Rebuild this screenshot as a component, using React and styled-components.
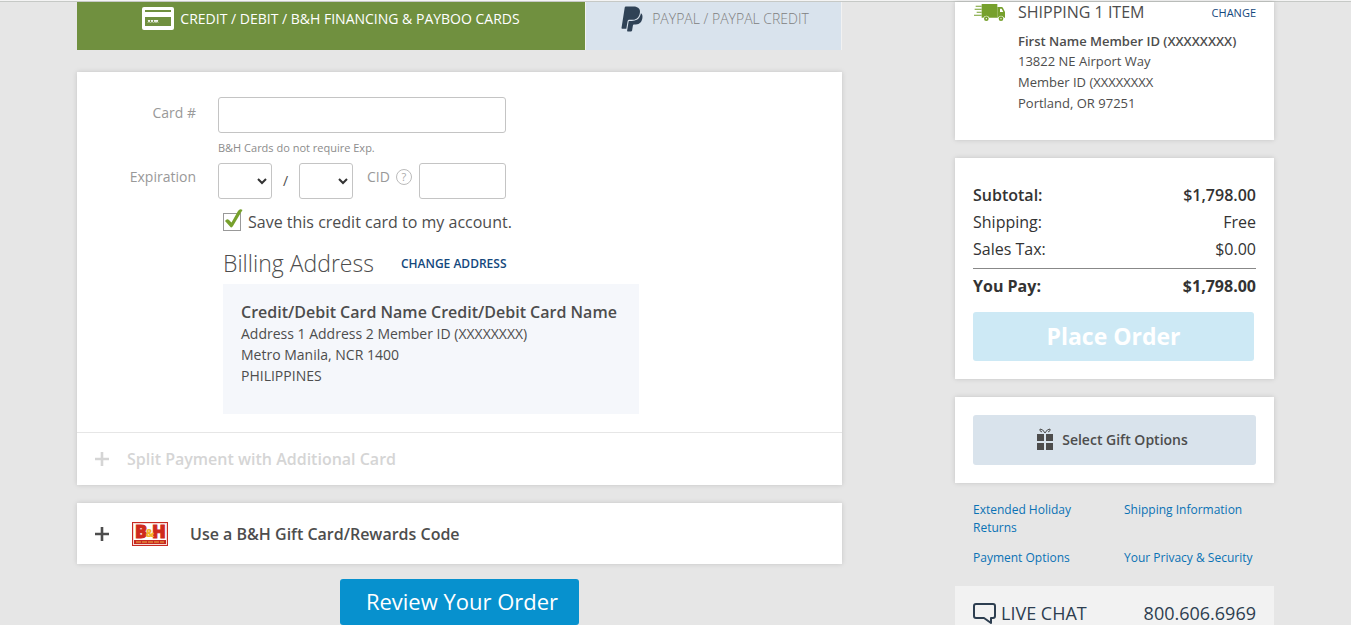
import React, { useState } from 'react';
import styled, { createGlobalStyle } from 'styled-components';
import { FaPaypal } from 'react-icons/fa';

const GlobalStyle = createGlobalStyle`
  * {
    box-sizing: border-box;
  }
  body {
    margin: 0;
    background: #e6e6e6;
    color: #4d4d4d;
    font-family: "Open Sans", "Noto Sans", sans-serif;
    font-size: 14px;
  }
  button, input, select {
    font-family: inherit;
    margin: 0;
  }
  a {
    text-decoration: none;
  }
`;

const TopLine = styled.div`
  height: 2px;
  background: #f4f4f4;
  border-bottom: 1px solid #c6c9c6;
`;
const Page = styled.div`
  display: grid;
  grid-template-columns: 765fr 319fr;
  column-gap: 113px;
  padding: 0 77px;
  align-items: start;
`;
const Column = styled.div`
  display: flex;
  flex-direction: column;
`;
const Card = styled.section`
  background: white;
  box-shadow: 0 0 5px rgba(0, 0, 0, 0.15);
  margin-bottom: 18px;
`;

/* payment tabs */
const Tabs = styled.div`
  display: grid;
  grid-template-columns: 508fr 255fr;
  gap: 1px;
  padding-right: 1px;
  margin-bottom: 22px;
  background: #f2f2f2;
`;
const Tab = styled.button`
  display: flex;
  align-items: center;
  justify-content: center;
  gap: 6px;
  height: 48px;
  padding: 0 0 15px;
  border: none;
  background: ${(props) => (props.$active ? '#70903f' : '#d9e3ed')};
  color: ${(props) => (props.$active ? 'white' : '#808080')};
  font-size: 14px;
  font-weight: ${(props) => (props.$active ? 400 : 300)};
  white-space: nowrap;
`;

/* card form */
const Form = styled.div`
  padding: 25px 0 18px;
`;
const FormRow = styled.div`
  display: grid;
  grid-template-columns: 119px 288px;
  column-gap: 22px;
`;
const Label = styled.label`
  color: #999;
  font-size: 14px;
  line-height: ${(props) => (props.$first ? 32 : 28)}px;
  text-align: right;
`;
const Hint = styled.div`
  grid-column: 2;
  color: #8c8c8c;
  font-size: 11px;
  line-height: 30px;
`;
const Input = styled.input`
  width: 100%;
  height: 36px;
  padding: 0 10px;
  border: 1px solid #c4c4c4;
  border-radius: 3px;
  background: white;
  font-size: 14px;
`;
const ExpirationFields = styled.div`
  display: grid;
  grid-template-columns: 54px 27px 54px 66px 87px;
`;
const SelectBox = styled.div`
  display: grid;
  align-items: center;
  > * {
    grid-area: 1 / 1;
  }
  > svg {
    justify-self: end;
    margin-right: 5px;
    pointer-events: none;
  }
`;
const Select = styled.select`
  appearance: none;
  width: 100%;
  height: 36px;
  padding: 0 8px;
  border: 1px solid #c4c4c4;
  border-radius: 3px;
  background: white;
  color: #4d4d4d;
  font-size: 14px;
`;
const Slash = styled.span`
  line-height: 36px;
  text-align: center;
`;
const CidLabel = styled.div`
  display: flex;
  align-items: center;
  gap: 6px;
  height: 28px;
  padding-left: 14px;
`;
const HelpButton = styled.button`
  width: 16px;
  height: 16px;
  padding: 0;
  border: 1px solid #bbb;
  border-radius: 50%;
  background: none;
  color: #aaa;
  font-size: 11px;
  line-height: 14px;
`;
const Indented = styled.div`
  margin-left: 146px;
`;
const SaveLabel = styled.label`
  display: flex;
  align-items: center;
  gap: 7px;
  margin-top: 10px;
  font-size: 16px;
  line-height: 26px;
`;
const CheckBox = styled.span`
  display: grid;
  width: 18px;
  > * {
    grid-area: 1 / 1;
  }
  > svg {
    overflow: visible;
    pointer-events: none;
  }
`;
const CheckInput = styled.input`
  appearance: none;
  width: 18px;
  height: 18px;
  border: 1px solid #999;
  background: white;
`;
const BillingHead = styled.div`
  display: flex;
  align-items: center;
  gap: 27px;
  margin-top: 12px;
`;
const BillingTitle = styled.h2`
  margin: 0;
  font-size: 23px;
  font-weight: 300;
  line-height: 32px;
`;
const TextLink = styled.a`
  color: #14487d;
  font-size: ${(props) => props.$size || 12}px;
  font-weight: ${(props) => props.$weight || 400};
`;
const AddressBox = styled.address`
  width: 416px;
  margin-top: 5px;
  padding: 17px 0 28px 18px;
  background: #f5f7fb;
  font-style: normal;
  font-size: 14px;
  line-height: 21px;
  white-space: nowrap;
  > strong {
    display: block;
    font-size: 16px;
    font-weight: 600;
    line-height: 22px;
  }
`;
const ExpandRow = styled.button`
  display: flex;
  align-items: center;
  width: 100%;
  height: ${(props) => (props.disabled ? 53 : 61)}px;
  padding: ${(props) => (props.disabled ? 0 : 1)}px 18px 0;
  border: none;
  border-top: ${(props) => (props.disabled ? '1px solid #e6e6e6' : 'none')};
  background: none;
  color: ${(props) => (props.disabled ? '#d5d5d5' : '#4d4d4d')};
  font-size: 16px;
  font-weight: 600;
  text-align: left;
  > span {
    margin-left: ${(props) => (props.disabled ? 18 : 22)}px;
  }
  > svg + svg {
    margin-left: 23px;
  }
`;
const ReviewButton = styled.button`
  align-self: center;
  height: 46px;
  margin-top: -3px;
  padding: 0 21px 2px 26px;
  border: none;
  border-radius: 3px;
  background: #0791ce;
  color: white;
  font-size: 22px;
`;

/* right column */
const ShippingCard = styled(Card)`
  display: grid;
  grid-template-columns: 31px 1fr;
  column-gap: 13px;
  height: 138px;
  padding: 0 18px 0 19px;
  > svg {
    margin-top: 2px;
  }
`;
const ShippingHead = styled.div`
  display: flex;
  align-items: center;
  justify-content: space-between;
  margin-bottom: 8px;
`;
const ShippingTitle = styled.h2`
  margin: 0;
  font-size: 16px;
  font-weight: 400;
  line-height: 21px;
`;
const ShippingAddress = styled.address`
  font-style: normal;
  font-size: 13px;
  line-height: 21px;
  > strong {
    display: block;
    font-weight: 600;
    line-height: 20px;
  }
`;
const SummaryCard = styled(Card)`
  padding: 23px 18px 18px;
`;
const Totals = styled.table`
  width: 100%;
  border-collapse: collapse;
  color: #333;
  font-size: 16px;
`;
const TotalRow = styled.tr`
  height: 27px;
  font-weight: ${(props) => props.$weight};
  > th {
    padding: 0;
    font-weight: inherit;
    text-align: left;
  }
  > td {
    padding: 0;
    text-align: right;
  }
  &:nth-last-child(2) {
    height: 33px;
    > * {
      padding-bottom: 5px;
    }
  }
  &:last-child {
    height: 36px;
    border-top: 1px solid #888;
  }
`;
const PlaceOrder = styled.button`
  display: block;
  width: calc(100% - 2px);
  height: 49px;
  margin-top: 8px;
  padding: 0 0 2px;
  border: none;
  border-radius: 3px;
  background: #cde9f5;
  color: white;
  font-size: 23px;
  font-weight: 700;
`;
const GiftCard = styled(Card)`
  padding: 18px;
`;
const GiftButton = styled.button`
  display: flex;
  align-items: center;
  justify-content: center;
  gap: 9px;
  width: 100%;
  height: 50px;
  padding: 0 4px 2px 0;
  border: none;
  border-radius: 3px;
  background: #d9e3ec;
  color: #4d4d4d;
  font-size: 14px;
  font-weight: 600;
`;
const Links = styled.nav`
  display: grid;
  grid-template-columns: 1fr 132px;
  column-gap: 19px;
  row-gap: 12px;
  padding: 0 18px;
  margin-bottom: 19px;
`;
const InfoLink = styled.a`
  max-width: 132px;
  padding-right: ${(props) => (props.$narrow ? 30 : 0)}px;
  color: #0a72b5;
  font-size: 12px;
  line-height: 18px;
`;
const ContactBar = styled.div`
  display: flex;
  align-items: center;
  justify-content: space-between;
  padding: 15px 18px 0;
  background: #f2f2f2;
  font-size: 18px;
  line-height: 24px;
`;
const ContactLink = styled.a`
  display: flex;
  align-items: center;
  gap: 5px;
  color: #2d3e50;
`;

const CardIcon = () => (
  <svg width="32" height="23" viewBox="0 0 32 23">
    <rect width="32" height="23" rx="2" fill="white" />
    <path d="M3 3h26v2H3zM3 10h26v9H3z" fill="#70903f" />
    <path d="M6 13l2 2.5M8 13l-2 2.5M9 13l2 2.5M11 13l-2 2.5M12 13l2 2.5M14 13l-2 2.5M14 13l2 2.5M16 13l-2 2.5" stroke="white" />
  </svg>
);

const TruckIcon = () => (
  <svg width="31" height="17" viewBox="0 0 93 51" fill="#76a02c">
    <path d="M26 0h44v41H46a10 10 0 0 0-18 0h-5V0z" />
    <path d="M5 5h18v3H5zM2 14h21v3H2zM8 23h15v3H8zM0 32h23v3H0z" />
    <path fillRule="evenodd" d="M70 9h13q3 0 4 3l6 12v17h-3a10 10 0 0 0-18 0h-2zM78 14v10h10l-5-10z" />
    <circle cx="37" cy="44" r="7" />
    <circle cx="81" cy="44" r="7" />
    <circle cx="37" cy="44" r="2" fill="white" />
    <circle cx="81" cy="44" r="2" fill="white" />
  </svg>
);

const Chevron = () => (
  <svg width="10" height="7" viewBox="0 0 10 7" fill="none" stroke="#333" strokeWidth="2">
    <path d="M1 1l4 4 4-4" />
  </svg>
);

const TickIcon = () => (
  <svg width="18" height="18" viewBox="0 0 18 18" fill="#76a02c">
    <path d="M2 8Q4 5 6 7L8.5 9.5 15-2Q17-5 19.5-3L10 13Q8.5 15.5 7 13.5z" />
  </svg>
);

const PlusIcon = () => (
  <svg width="14" height="14" viewBox="0 0 14 14" stroke="currentColor" strokeWidth="2.6">
    <path d="M7 0v14M0 7h14" />
  </svg>
);

const Logo = styled.svg`
  overflow: visible;
`;
const StoreLogo = () => (
  <Logo width="36" height="24" viewBox="0 0 36 24">
    <rect width="36" height="24" fill="#c62a22" />
    <rect x="1" y="1" width="34" height="22" fill="#f7d9d4" />
    <rect x="2" y="2" width="32" height="20" fill="white" />
    <rect x="2" y="18" width="32" height="4" fill="#c62a22" />
    <path d="M4 20h28" stroke="#f0b040" strokeDasharray="5 1" />
    <g fontFamily="Open Sans, sans-serif" fontWeight="800" textAnchor="middle">
      <text x="9" y="16" fontSize="18" fill="#cf2a1c" stroke="#cf2a1c">B</text>
      <text x="27" y="16" fontSize="18" fill="#cf2a1c" stroke="#cf2a1c">H</text>
      <text x="18" y="15" fontSize="11" fill="#f3b229">&amp;</text>
    </g>
  </Logo>
);

const GiftIcon = () => (
  <svg width="16" height="22" viewBox="0 0 16 22" fill="#4d4d4d">
    <path d="M0 6h7v7H0zM9 6h7v7H9zM0 15h7v7H0zM9 15h7v7H9z" />
    <path d="M8 5Q6 1 3 1 2 3 5 4M8 5q2-4 5-4 1 2-2 3" fill="none" stroke="#4d4d4d" />
  </svg>
);

const ChatIcon = () => (
  <svg width="23" height="22" viewBox="0 0 23 22" fill="none" stroke="#2d3e50" strokeWidth="2" strokeLinejoin="round">
    <path d="M3 2h17q2 0 2 2v10q0 2-2 2h-2v5l-7-5H3q-2 0-2-2V4q0-2 2-2z" />
  </svg>
);

const totals = [
  { label: 'Subtotal:', value: '$1,798.00', weight: 600 },
  { label: 'Shipping:', value: 'Free', weight: 400 },
  { label: 'Sales Tax:', value: '$0.00', weight: 400 },
  { label: 'You Pay:', value: '$1,798.00', weight: 700 },
];

const months = ['01', '02', '03', '04', '05', '06', '07', '08', '09', '10', '11', '12'];
const years = ['22', '23', '24', '25', '26', '27', '28'];

const DateSelect = ({ id, label, options }) => (
  <SelectBox>
    <Select id={id} aria-label={label} defaultValue="">
      <option value=""></option>
      {options.map((option) => <option key={option}>{option}</option>)}
    </Select>
    <Chevron />
  </SelectBox>
);

function App() {
  const [saveCard, updateSaveCard] = useState(true);

  return (
    <>
      <GlobalStyle />
      <TopLine />
      <Page>
        <Column>
          <Tabs>
            <Tab $active>
              <CardIcon />
              CREDIT / DEBIT / B&amp;H FINANCING &amp; PAYBOO CARDS
            </Tab>
            <Tab>
              <FaPaypal size={28} color="#2f4256" />
              PAYPAL / PAYPAL CREDIT
            </Tab>
          </Tabs>
          <Card>
            <Form>
              <FormRow>
                <Label htmlFor="card" $first>Card #</Label>
                <Input id="card" type="text" />
                <Hint>B&amp;H Cards do not require Exp.</Hint>
                <Label htmlFor="month">Expiration</Label>
                <ExpirationFields>
                  <DateSelect id="month" label="Expiration month" options={months} />
                  <Slash>/</Slash>
                  <DateSelect id="year" label="Expiration year" options={years} />
                  <CidLabel>
                    <Label htmlFor="cid">CID</Label>
                    <HelpButton aria-label="About CID">?</HelpButton>
                  </CidLabel>
                  <Input id="cid" type="text" />
                </ExpirationFields>
              </FormRow>
              <Indented>
                <SaveLabel>
                  <CheckBox>
                    <CheckInput
                      type="checkbox"
                      checked={saveCard}
                      onChange={(event) => updateSaveCard(event.target.checked)}
                    />
                    {saveCard ? <TickIcon /> : null}
                  </CheckBox>
                  Save this credit card to my account.
                </SaveLabel>
                <BillingHead>
                  <BillingTitle>Billing Address</BillingTitle>
                  <TextLink href="#address" $weight={600}>CHANGE ADDRESS</TextLink>
                </BillingHead>
                <AddressBox>
                  <strong>Credit/Debit Card Name Credit/Debit Card Name</strong>
                  Address 1 Address 2 Member ID (XXXXXXXX)<br />
                  Metro Manila, NCR 1400<br />
                  PHILIPPINES
                </AddressBox>
              </Indented>
            </Form>
            <ExpandRow disabled>
              <PlusIcon />
              <span>Split Payment with Additional Card</span>
            </ExpandRow>
          </Card>
          <Card>
            <ExpandRow>
              <PlusIcon />
              <StoreLogo />
              <span>Use a B&amp;H Gift Card/Rewards Code</span>
            </ExpandRow>
          </Card>
          <ReviewButton>Review Your Order</ReviewButton>
        </Column>

        <Column>
          <ShippingCard>
            <TruckIcon />
            <div>
              <ShippingHead>
                <ShippingTitle>SHIPPING 1 ITEM</ShippingTitle>
                <TextLink href="#shipping" $size={11}>CHANGE</TextLink>
              </ShippingHead>
              <ShippingAddress>
                <strong>First Name Member ID (XXXXXXXX)</strong>
                13822 NE Airport Way<br />
                Member ID (XXXXXXXX<br />
                Portland, OR 97251
              </ShippingAddress>
            </div>
          </ShippingCard>
          <SummaryCard>
            <Totals>
              <tbody>
                {totals.map((row) => (
                  <TotalRow key={row.label} $weight={row.weight}>
                    <th scope="row">{row.label}</th>
                    <td>{row.value}</td>
                  </TotalRow>
                ))}
              </tbody>
            </Totals>
            <PlaceOrder>Place Order</PlaceOrder>
          </SummaryCard>
          <GiftCard>
            <GiftButton>
              <GiftIcon />
              Select Gift Options
            </GiftButton>
          </GiftCard>
          <Links>
            <InfoLink href="#returns" $narrow>Extended Holiday Returns</InfoLink>
            <InfoLink href="#shipping-info">Shipping Information</InfoLink>
            <InfoLink href="#payment">Payment Options</InfoLink>
            <InfoLink href="#privacy">Your Privacy &amp; Security</InfoLink>
          </Links>
          <ContactBar>
            <ContactLink href="#chat">
              <ChatIcon />
              LIVE CHAT
            </ContactLink>
            <ContactLink href="tel:8006066969">800.606.6969</ContactLink>
          </ContactBar>
        </Column>
      </Page>
    </>
  );
}

export default App;
